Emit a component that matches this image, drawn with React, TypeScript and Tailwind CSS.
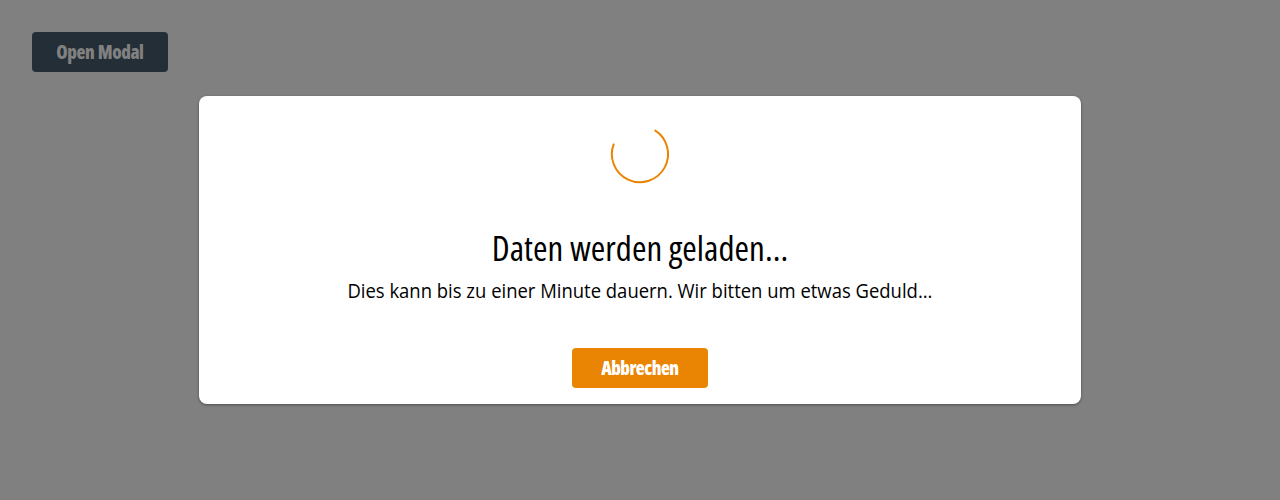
export default function App() {
  return (
    <div className="relative h-[500px] w-full overflow-hidden bg-[#808080] p-8 font-['Open_Sans','Noto_Sans',sans-serif]">
      <button className="flex h-10 w-[136px] items-center justify-center rounded-[4px] bg-[#232e37] text-[19px] font-extrabold tracking-[-0.5px] text-[#808080]">
        <span className="scale-x-[0.97] whitespace-nowrap [font-stretch:75%] [word-spacing:1px]">Open Modal</span>
      </button>
      <div className="absolute inset-0 flex items-center justify-center">
        <div
          role="dialog"
          className="flex h-[308px] w-[882px] flex-col items-center rounded-[8px] bg-white pt-[26px] text-black shadow-[0_1px_3px_rgba(0,0,0,0.4)]"
        >
          <svg width="64" height="64" viewBox="0 0 64 64" fill="none">
            <path d="M46.6 8.1A28.1 28.1 0 1 1 5.9 21.6" stroke="#ea8504" strokeWidth="2" />
          </svg>
          <h1 className="mt-[38px] h-12 whitespace-nowrap text-[35px] leading-[48px] tracking-[0.05px] [font-stretch:75%]">
            Daten werden geladen...
          </h1>
          <p className="mt-[5px] h-7 scale-x-[0.923] whitespace-nowrap text-[20px] leading-[28px]">
            Dies kann bis zu einer Minute dauern. Wir bitten um etwas Geduld...
          </p>
          <button className="mt-[43px] flex h-10 w-[136px] items-center justify-center rounded-[4px] bg-[#ea8504] text-[19px] font-extrabold tracking-[-0.55px] text-white">
            <span className="scale-x-[0.97] whitespace-nowrap [font-stretch:75%]">Abbrechen</span>
          </button>
        </div>
      </div>
    </div>
  );
}
